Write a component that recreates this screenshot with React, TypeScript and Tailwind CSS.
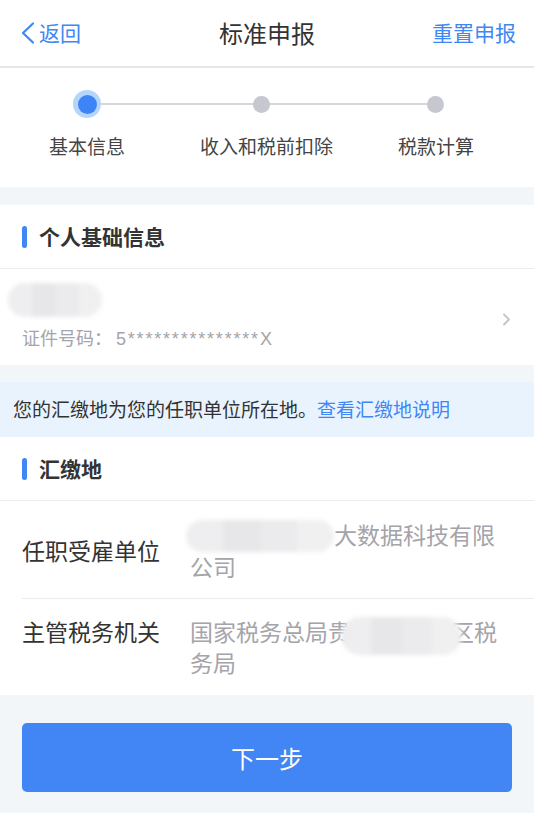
import React from "react";

const FONT = { fontFamily: '"Noto Sans CJK SC", "Noto Sans", sans-serif' };

function Blob({ className = "" }: { className?: string }) {
  return (
    <div className={"absolute overflow-hidden rounded-full blur-[2px] flex " + className}>
      <div className="flex-1 bg-[#eeeef0]" />
      <div className="flex-1 bg-[#e7e7e9]" />
      <div className="flex-1 bg-[#ebebed]" />
      <div className="flex-1 bg-[#f0f0f1]" />
    </div>
  );
}

function SectionHeader({ title }: { title: string }) {
  return (
    <div className="h-[64px] bg-white flex items-center pl-[22px] gap-[12px] border-b border-[#ececf0]">
      <div className="w-[5px] h-[22px] rounded-full bg-[#3f87f5]" />
      <div className="text-[21px] font-semibold text-[#333]">{title}</div>
    </div>
  );
}

export default function App() {
  return (
    <div style={FONT} className="min-h-screen bg-[#f3f6f9] w-[534px]">
      {/* Header */}
      <div className="h-[68px] bg-white border-b-2 border-[#e6e6eb] flex items-center justify-between pl-[20px] pr-[18px] relative">
        <div className="flex items-center gap-[4px] text-[#3f87f5] text-[21px]">
          <svg width="15" height="24" viewBox="0 0 15 24" fill="none">
            <path d="M13 2.5 L3 12 L13 21.5" stroke="#3f87f5" strokeWidth="2.2" strokeLinecap="round" strokeLinejoin="round" />
          </svg>
          <span>返回</span>
        </div>
        <div className="absolute left-0 right-0 text-center text-[24px] text-[#333] pointer-events-none">标准申报</div>
        <div className="text-[21px] text-[#3f87f5]">重置申报</div>
      </div>

      {/* Steps */}
      <div className="h-[119px] bg-white relative flex justify-between pl-[49px] pr-[60px]">
        <div className="absolute left-[90px] right-[98px] top-[35px] h-[2px] bg-[#d6d6dd]" />
        <div className="relative flex flex-col items-center pt-[22px]">
          <div className="w-[28px] h-[28px] rounded-full bg-[#b6d5fb] flex items-center justify-center">
            <div className="w-[19px] h-[19px] rounded-full bg-[#3d85f6]" />
          </div>
          <div className="mt-[15px] text-[19px] leading-[26px] text-[#444]">基本信息</div>
        </div>
        <div className="relative flex flex-col items-center pt-[22px]">
          <div className="w-[28px] h-[28px] flex items-center justify-center">
            <div className="w-[17px] h-[17px] rounded-full bg-[#c6c7cf]" />
          </div>
          <div className="relative left-[5px] mt-[15px] text-[19px] leading-[26px] text-[#444]">收入和税前扣除</div>
        </div>
        <div className="relative flex flex-col items-center pt-[22px]">
          <div className="w-[28px] h-[28px] flex items-center justify-center">
            <div className="w-[17px] h-[17px] rounded-full bg-[#c6c7cf]" />
          </div>
          <div className="mt-[15px] text-[19px] leading-[26px] text-[#444]">税款计算</div>
        </div>
      </div>

      <div className="h-[18px]" />

      <SectionHeader title="个人基础信息" />

      {/* ID row */}
      <div className="h-[96px] bg-white flex items-center justify-between pl-[22px] pr-[23px]">
        <div className="flex flex-col">
          <div className="relative h-[34px] w-[80px]">
            <Blob className="-left-[14px] right-0 top-0 bottom-0" />
          </div>
          <div className="mt-[7px] text-[18px] leading-[26px] text-[#a4a4aa]">
            证件号码：
            <span
              className="ml-[4px] tracking-[1.8px]"
              style={{ fontFamily: '"Liberation Sans", Arial, sans-serif' }}
            >
              5***************X
            </span>
          </div>
        </div>
        <svg width="9" height="13" viewBox="0 0 9 13" fill="none" className="mt-[4px]">
          <path d="M2 1.5 L7 6.5 L2 11.5" stroke="#c3c3ca" strokeWidth="1.8" strokeLinecap="round" strokeLinejoin="round" />
        </svg>
      </div>

      <div className="h-[17px]" />

      {/* Info band */}
      <div className="h-[55px] bg-[#e9f3fe] flex items-center px-[13px] text-[19px] text-[#333]">
        <span>您的汇缴地为您的任职单位所在地。</span>
        <span className="text-[#3f87f5]">查看汇缴地说明</span>
      </div>

      <SectionHeader title="汇缴地" />

      {/* Rows */}
      <div className="bg-white">
        <div className="flex items-center pl-[22px] pt-[17px] pb-[16px]">
          <div className="w-[168px] shrink-0 text-[23px] text-[#333] leading-[32px]">任职受雇单位</div>
          <div className="w-[314px] text-[23px] leading-[32px] text-[#a4a4aa]">
            <span className="relative inline-block w-[144px] h-[32px] align-top">
              <Blob className="-left-[4px] right-0 top-[2px] bottom-[-2px]" />
            </span>
            大数据科技有限公司
          </div>
        </div>
        <div className="ml-[22px] h-px bg-[#ececf0]" />
        <div className="flex items-start pl-[22px] pt-[17px] pb-[17px]">
          <div className="w-[168px] shrink-0 text-[23px] text-[#333] leading-[31px]">主管税务机关</div>
          <div className="w-[314px] text-[23px] leading-[31px] text-[#a4a4aa]">
            国家税务总局贵
            <span className="relative inline-block w-[100px] h-[31px] align-top">
              <Blob className="-left-[10px] -right-[11px] top-[1px] bottom-[-8px]" />
            </span>
            区税务局
          </div>
        </div>
      </div>

      {/* Button */}
      <div className="px-[22px] pt-[28px] pb-[22px]">
        <div className="h-[69px] rounded-[5px] bg-[#4286f5] flex items-center justify-center text-white text-[24px]">
          下一步
        </div>
      </div>
    </div>
  );
}
